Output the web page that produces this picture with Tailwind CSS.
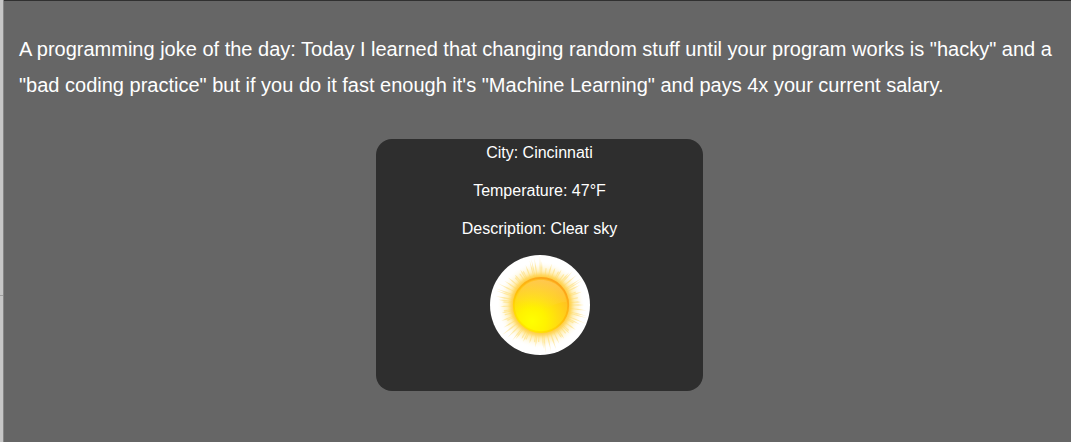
<!DOCTYPE html>
<html lang="en">
<head>
<meta charset="utf-8">
<meta name="viewport" content="width=device-width, initial-scale=1">
<title>Joke of the day</title>
<script src="https://cdn.jsdelivr.net/npm/@tailwindcss/browser@4"></script>
</head>
<body class="flex min-h-screen bg-[#666666] font-['Liberation_Sans',Arial,sans-serif] text-white">
  <div class="flex w-1 shrink-0 flex-col border-r border-[#858585] bg-[#c6c6c6]">
    <div class="h-[296px] border-b border-[#a0a0a0]"></div>
  </div>
  <main class="flex-1 border-t border-[#303030] pt-[30px] pr-[11px] pb-9 pl-[15px]">
    <p class="text-xl leading-9">A programming joke of the day: Today I learned that changing random stuff until your program works is "hacky" and a "bad coding practice" but if you do it fast enough it's "Machine Learning" and pays 4x your current salary.</p>
    <section class="mx-auto mt-9 flex w-full max-w-[327px] flex-col items-center rounded-2xl bg-[#2e2e2e] pb-9 text-center" aria-label="Weather">
      <div class="flex flex-col gap-[10px] text-base leading-7">
        <p>City: Cincinnati</p>
        <p>Temperature: 47°F</p>
        <p>Description: Clear sky</p>
      </div>
      <svg class="mt-3 size-[100px] rounded-full bg-white" viewBox="0 0 100 100" role="img" aria-label="Sun">
        <defs>
          <radialGradient id="halo" gradientUnits="userSpaceOnUse" cx="51" cy="50" r="44">
            <stop offset=".62" stop-color="#ffc832"/>
            <stop offset=".69" stop-color="#ffd65a" stop-opacity=".9"/>
            <stop offset=".77" stop-color="#ffe58c" stop-opacity=".6"/>
            <stop offset=".88" stop-color="#fff0b8" stop-opacity=".28"/>
            <stop offset="1" stop-color="#fff" stop-opacity="0"/>
          </radialGradient>
          <radialGradient id="ray" gradientUnits="userSpaceOnUse" cx="51" cy="50" r="50">
            <stop offset=".6" stop-color="#ffd348" stop-opacity=".3"/>
            <stop offset=".76" stop-color="#ffde78" stop-opacity=".6"/>
            <stop offset="1" stop-color="#ffe9a0" stop-opacity=".45"/>
          </radialGradient>
          <linearGradient id="rim" x1=".2" y1=".9" x2=".7" y2=".1">
            <stop offset="0" stop-color="#ffe600"/>
            <stop offset=".5" stop-color="#ffbf0c"/>
            <stop offset="1" stop-color="#fba41a"/>
          </linearGradient>
          <radialGradient id="disc" cx=".34" cy=".8" r=".85">
            <stop offset="0" stop-color="#ffff00"/>
            <stop offset=".3" stop-color="#fff200"/>
            <stop offset=".6" stop-color="#ffd814"/>
            <stop offset="1" stop-color="#ffb628"/>
          </radialGradient>
          <linearGradient id="gloss" x1=".6" y1="0" x2=".45" y2="1">
            <stop offset="0" stop-color="#ffd27a" stop-opacity=".5"/>
            <stop offset=".7" stop-color="#ffd760" stop-opacity=".15"/>
            <stop offset="1" stop-color="#ffe000" stop-opacity="0"/>
          </linearGradient>
        </defs>
        <circle cx="51" cy="50" r="44" fill="url(#halo)"/>
        <path id="rays" fill="url(#ray)"/>
        <circle cx="51" cy="50" r="27.2" fill="url(#disc)" stroke="url(#rim)" stroke-width="1.8"/>
        <path d="M26 51C26 35 37 25 51 25S76 35 76 47C65 47 60 54 48 56C38 57 29 56 26 51Z" fill="url(#gloss)"/>
      </svg>
    </section>
  </main>
  <script>
    // Thin tapered rays of uneven length around the sun's disc.
    const lengths = [43, 38, 48, 41, 37, 46, 40, 49, 39, 43, 47, 38, 44];
    let d = '';
    for (let i = 0; i < 76; i++) {
      const a = (i + (i % 3) * 0.3 + (i % 5) * 0.12) * Math.PI / 38;
      const r = lengths[(i * 5) % lengths.length];
      const at = (radius, angle) => (51 + radius * Math.cos(angle)).toFixed(2) + ' ' + (50 + radius * Math.sin(angle)).toFixed(2);
      d += 'M' + at(29, a - 0.01) + 'L' + at(37, a - 0.018) + 'L' + at(r, a) + 'L' + at(37, a + 0.018) + 'L' + at(29, a + 0.01) + 'Z';
    }
    document.getElementById('rays').setAttribute('d', d);
  </script>
</body>
</html>
